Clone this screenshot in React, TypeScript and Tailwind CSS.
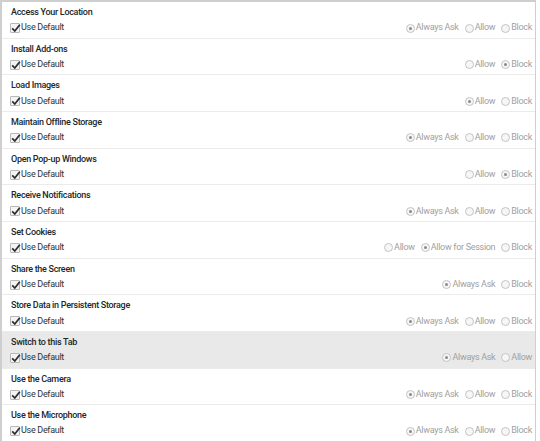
import React from 'react';

type Perm = {
    title: string;
    options: string[];
    selected: string;
};

const perms: Perm[] = [
    { title: 'Access Your Location', options: ['Always Ask', 'Allow', 'Block'], selected: 'Always Ask' },
    { title: 'Install Add-ons', options: ['Allow', 'Block'], selected: 'Block' },
    { title: 'Load Images', options: ['Allow', 'Block'], selected: 'Allow' },
    { title: 'Maintain Offline Storage', options: ['Always Ask', 'Allow', 'Block'], selected: 'Always Ask' },
    { title: 'Open Pop-up Windows', options: ['Allow', 'Block'], selected: 'Block' },
    { title: 'Receive Notifications', options: ['Always Ask', 'Allow', 'Block'], selected: 'Always Ask' },
    { title: 'Set Cookies', options: ['Allow', 'Allow for Session', 'Block'], selected: 'Allow for Session' },
    { title: 'Share the Screen', options: ['Always Ask', 'Block'], selected: 'Always Ask' },
    { title: 'Store Data in Persistent Storage', options: ['Always Ask', 'Allow', 'Block'], selected: 'Always Ask' },
    { title: 'Switch to this Tab', options: ['Always Ask', 'Allow'], selected: 'Always Ask' },
    { title: 'Use the Camera', options: ['Always Ask', 'Allow', 'Block'], selected: 'Always Ask' },
    { title: 'Use the Microphone', options: ['Always Ask', 'Allow', 'Block'], selected: 'Always Ask' },
];

function Checkbox() {
    return (
        <span className="relative inline-block w-[10px] h-[10px] border border-[#b8b8b8] bg-[#f4f4f4] rounded-[1px]">
            <svg viewBox="0 0 10 10" className="absolute left-0 -top-px w-[10px] h-[10px]">
                <path d="M1.2 5.3 L3.8 8 L8.8 1.8" fill="none" stroke="#2e2e2e" strokeWidth="1.8" />
            </svg>
        </span>
    );
}

function Radio({ checked }: { checked: boolean }) {
    return (
        <span className="flex items-center justify-center w-[9px] h-[9px] rounded-full border border-[#c4c4c4] bg-[#f6f6f6]">
            {checked && <span className="w-[3px] h-[3px] rounded-full bg-[#8a8a8a]" />}
        </span>
    );
}

export default function App() {
    return (
        <div className="w-[540px] h-[441px] bg-white overflow-hidden tracking-[-0.3px]" style={{ fontFamily: 'Roboto, sans-serif' }}>
            <div className="w-[536px] h-[441px] border-t-2 border-l-2 border-r border-[#cfcfcf]">
                {perms.map((p, i) => (
                    <div
                        key={p.title}
                        className={`h-[36.67px] border-b border-[#ebebeb] pl-[8px] pr-[3px] pt-[3px] ${i === 9 ? 'bg-[#e9e9e9]' : 'bg-white'}`}
                    >
                        <div className="text-[9px] leading-[14px] font-medium text-[#22272a] pl-[1px]">{p.title}</div>
                        <div className="flex items-center justify-between h-[18px]">
                            <div className="flex items-center text-[9px] text-[#2e3436]">
                                <Checkbox />
                                <span className="ml-[1px]">Use Default</span>
                            </div>
                            <div className="flex items-center gap-[6px] text-[9px] text-[#a0a0a0]">
                                {p.options.map((o) => (
                                    <div key={o} className="flex items-center gap-[1px]">
                                        <Radio checked={o === p.selected} />
                                        <span>{o}</span>
                                    </div>
                                ))}
                            </div>
                        </div>
                    </div>
                ))}
            </div>
        </div>
    );
}
